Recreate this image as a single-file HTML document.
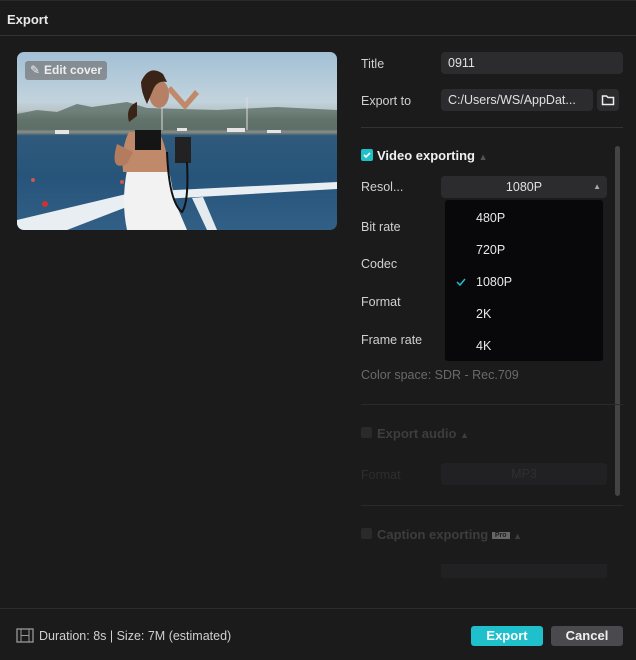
<!DOCTYPE html>
<html><head><meta charset="utf-8"><style>
*{margin:0;padding:0;box-sizing:border-box}
body{width:636px;height:660px;background:#1b1b1c;font-family:"Liberation Sans",sans-serif;color:#d8d8d8;position:relative;overflow:hidden;font-size:12.5px}
.abs{position:absolute}
.hdr{left:0;top:0;width:636px;height:36px;border-bottom:1px solid #333;border-top:1px solid #2a2a2a}
.hdr span{position:absolute;left:7px;top:11px;font-weight:bold;font-size:13px;color:#e8e8e8}
.lbl{left:361px;color:#d0d0d0;font-size:12.5px}
.inp{background:#2c2c2e;border-radius:4px;height:22px;color:#e0e0e0;padding-left:7px;line-height:22px;font-size:12.5px}
.sep{left:361px;width:262px;height:1px;background:#333}
.dd{left:444px;top:199px;width:160px;height:163px;background:#08080a;border-radius:4px;border:1px solid #1a1a1a}
.dd div{position:absolute;left:31px;color:#e8e8e8;font-size:12.5px}
.dim{color:#3d3d3d}
.btn{top:626px;height:20px;border-radius:3px;font-weight:bold;font-size:13px;text-align:center;line-height:20px}
</style></head><body>
<div class="abs hdr"><span>Export</span></div>

<div class="abs" style="left:17px;top:52px;width:320px;height:178px;border-radius:7px;overflow:hidden;background:linear-gradient(#a3c0d6 0%,#c2d3dd 28%,#b9c4c6 33%,#6f8078 38%,#5d6e66 43%,#8a8e86 45%,#2f5a7c 47%,#27547a 70%,#325f86 100%)">
<svg width="320" height="178" style="position:absolute;left:0;top:0">
<path d="M0 62 L20 58 L40 60 L60 52 L75 55 L110 50 L130 56 L200 58 L260 55 L320 58 L320 78 L0 78Z" fill="#5e6f68" opacity=".8"/>
<rect x="38" y="78" width="14" height="4" fill="#e5e5e5"/><rect x="210" y="76" width="18" height="4" fill="#e5e5e5"/><rect x="250" y="78" width="14" height="3" fill="#e5e5e5"/><rect x="160" y="76" width="10" height="3" fill="#e5e5e5"/>
<line x1="145" y1="40" x2="145" y2="78" stroke="#ddd" stroke-width="1"/>
<line x1="230" y1="45" x2="230" y2="78" stroke="#ddd" stroke-width="1"/>
<polygon points="0,178 0,168 118,140 320,130 320,137 128,148 50,178" fill="#e8eef2"/>
<polygon points="175,146 186,145 200,178 190,178" fill="#e5eaee"/>
<path d="M110 118 Q104 150 110 178 L170 178 L158 150 L152 118 Z" fill="#f2f2f2"/>
<path d="M112 80 Q104 95 106 120 L152 120 Q150 95 142 80 Z" fill="#c08a6a"/>
<path d="M100 92 Q92 120 110 112 L116 100 Z" fill="#b47c5e"/>
<rect x="118" y="78" width="26" height="20" fill="#151515"/>
<ellipse cx="142" cy="42" rx="10" ry="14" fill="#b58064"/>
<path d="M146 22 Q132 12 124 30 Q124 40 130 52 L136 38 Q140 28 150 30 Z" fill="#3a2418"/>
<path d="M120 50 Q108 55 112 70 L120 64 Z" fill="#3a2418"/>
<path d="M150 38 L168 58 L182 42 L178 38 L168 50 L154 34 Z" fill="#c08a6a"/>
<rect x="158" y="85" width="16" height="26" fill="#222"/>
<path d="M150 100 Q152 150 165 160 Q172 150 170 110" stroke="#111" stroke-width="2" fill="none"/>
<circle cx="28" cy="152" r="3" fill="#c33"/><circle cx="16" cy="128" r="2" fill="#c55"/><circle cx="105" cy="130" r="2" fill="#c55"/>
</svg>
<div class="abs" style="left:8px;top:9px;width:82px;height:19px;background:rgba(110,110,110,.65);border-radius:3px;color:#eee;font-weight:bold;font-size:12px;line-height:19px;padding-left:19px">Edit cover<span class="abs" style="left:5px;top:0;font-weight:normal">✎</span></div>
</div>

<div class="abs lbl" style="top:57px">Title</div>
<div class="abs inp" style="left:441px;top:52px;width:182px">0911</div>
<div class="abs lbl" style="top:94px">Export to</div>
<div class="abs inp" style="left:441px;top:89px;width:152px">C:/Users/WS/AppDat...</div>
<div class="abs inp" style="left:597px;top:89px;width:22px;padding:0">
<svg width="22" height="22"><path d="M5.5 7h4l1.5 1.5h5.5v7h-11z" fill="none" stroke="#eee" stroke-width="1.5"/></svg></div>
<div class="abs sep" style="top:127px"></div>

<div class="abs" style="left:361px;top:149px;width:12px;height:12px;background:#1fc0c8;border-radius:2px"><svg width="12" height="12"><path d="M3 6l2 2 4-4" stroke="#fff" stroke-width="1.6" fill="none"/></svg></div>
<div class="abs" style="left:377px;top:148px;font-weight:bold;font-size:13px;color:#f0f0f0">Video exporting <span style="color:#555;font-size:9px">▲</span></div>
<div class="abs lbl" style="top:180px">Resol...</div>
<div class="abs inp" style="left:441px;top:176px;width:166px;text-align:center;padding:0">1080P<span class="abs" style="right:6px;top:0;color:#aaa;font-size:8px">▲</span></div>
<div class="abs lbl" style="top:220px">Bit rate</div>
<div class="abs lbl" style="top:257px">Codec</div>
<div class="abs lbl" style="top:295px">Format</div>
<div class="abs lbl" style="top:333px">Frame rate</div>
<div class="abs lbl" style="top:368px;color:#6a6a6a">Color space: SDR - Rec.709</div>
<div class="abs dd">
<div style="top:11px">480P</div><div style="top:43px">720P</div>
<div style="top:75px">1080P</div><div style="top:107px">2K</div><div style="top:139px">4K</div>
<svg class="abs" style="left:11px;top:77px" width="10" height="10"><path d="M1 5l3 3 5-6" stroke="#1fc0c8" stroke-width="1.5" fill="none"/></svg>
</div>
<div class="abs" style="left:615px;top:146px;width:5px;height:350px;background:#444;border-radius:3px"></div>
<div class="abs sep" style="top:404px;background:#2a2a2a"></div>
<div class="abs" style="left:361px;top:427px;width:11px;height:11px;border-radius:2px;background:#2a2a2a"></div>
<div class="abs dim" style="left:377px;top:426px;font-weight:bold;font-size:13px">Export audio <span style="font-size:9px">▲</span></div>
<div class="abs dim" style="left:361px;top:468px;color:#2e2e2e">Format</div>
<div class="abs" style="left:441px;top:463px;width:166px;height:22px;background:#212123;border-radius:3px;color:#2f2f2f;text-align:center;line-height:22px">MP3</div>
<div class="abs sep" style="top:505px;background:#2a2a2a"></div>
<div class="abs" style="left:361px;top:528px;width:11px;height:11px;border-radius:2px;background:#2a2a2a"></div>
<div class="abs dim" style="left:377px;top:527px;font-weight:bold;font-size:13px">Caption exporting <span style="background:#666;color:#222;font-size:7px;padding:0 3px;vertical-align:2px">Pro</span> <span style="font-size:9px">▲</span></div>
<div class="abs" style="left:441px;top:564px;width:166px;height:14px;background:#212123"></div>

<div class="abs" style="left:0;top:608px;width:636px;height:1px;background:#2c2c2c"></div>
<svg class="abs" style="left:16px;top:628px" width="18" height="15"><rect x="1" y="1" width="16" height="13" fill="none" stroke="#999" stroke-width="1.3"/><line x1="5" y1="1" x2="5" y2="14" stroke="#999"/><line x1="13" y1="1" x2="13" y2="14" stroke="#999"/><line x1="5" y1="7.5" x2="13" y2="7.5" stroke="#999"/></svg>
<div class="abs" style="left:39px;top:629px;color:#d0d0d0">Duration: 8s | Size: 7M (estimated)</div>
<div class="abs btn" style="left:471px;width:72px;background:#1fbfcb;color:#fff">Export</div>
<div class="abs btn" style="left:551px;width:72px;background:#4a4a4e;color:#f0f0f0">Cancel</div>
</body></html>
